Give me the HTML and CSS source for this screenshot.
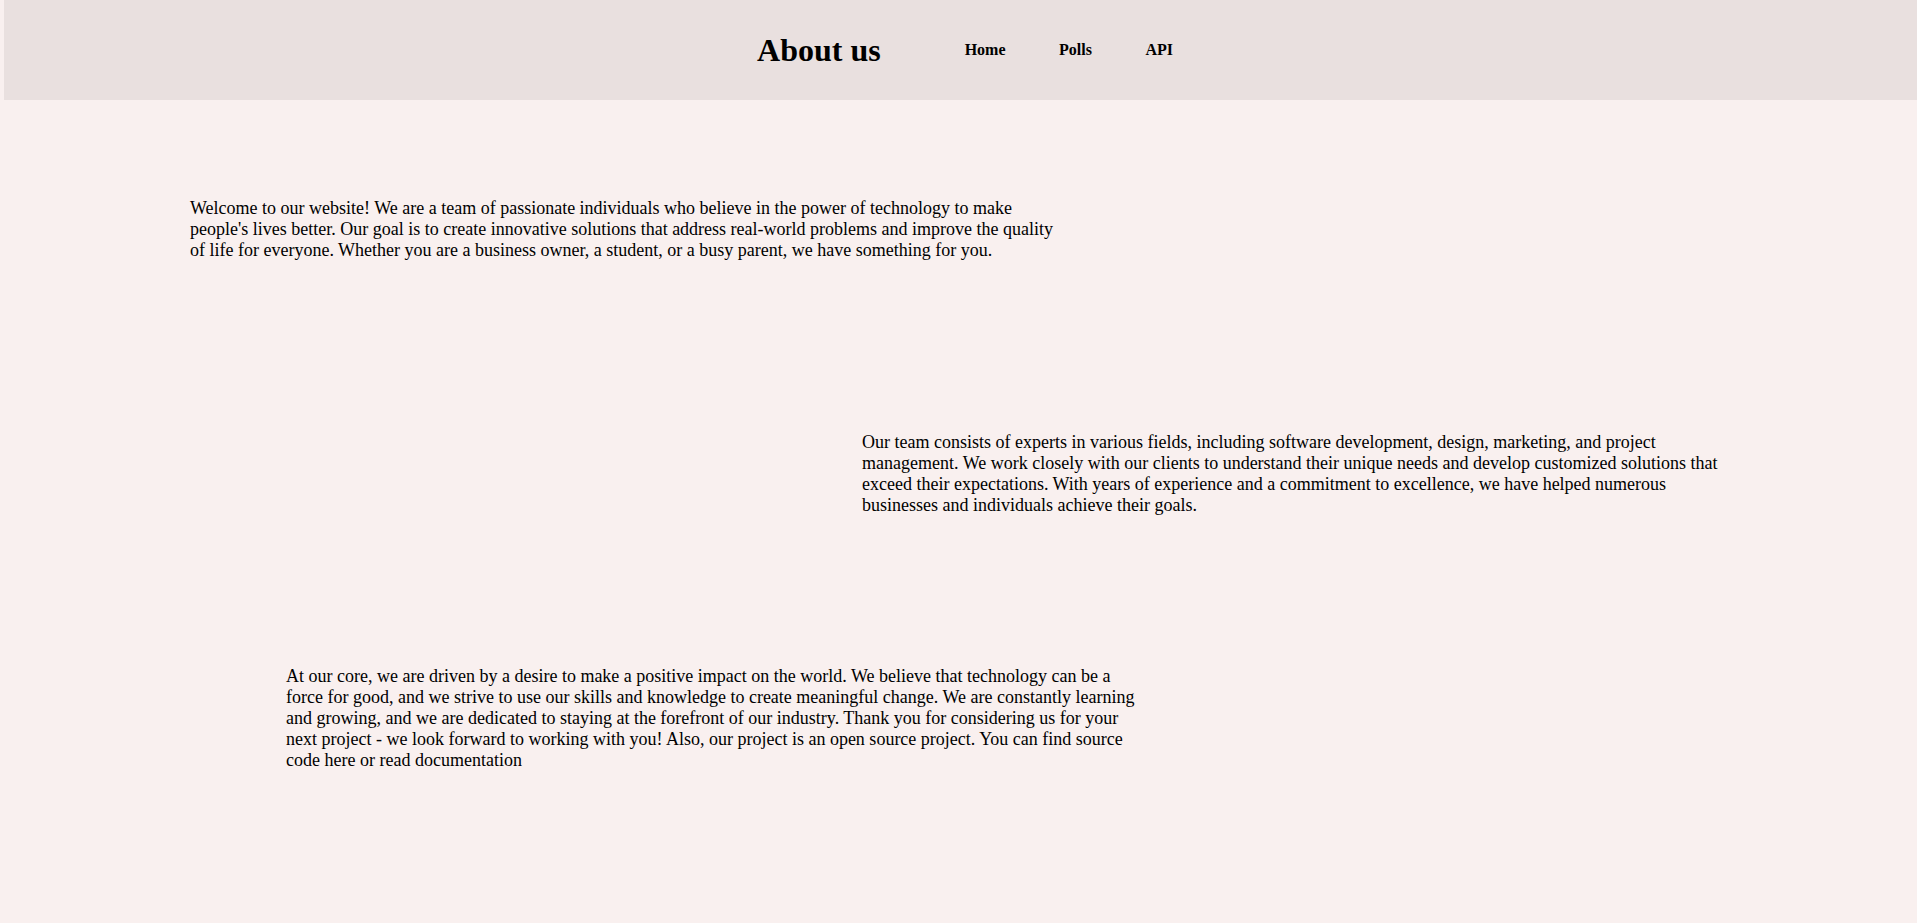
FILE: index.html
```html
<!DOCTYPE html>
<html lang="en">
<head>
<meta charset="utf-8">
<title>About us</title>
<link rel="stylesheet" href="styles.css">
</head>
<body>
<header class="topbar">
  <h1 class="title">About us</h1>
  <nav class="nav">
    <a class="nav-link" href="#">Home</a>
    <a class="nav-link" href="#">Polls</a>
    <a class="nav-link" href="#">API</a>
  </nav>
</header>
<main class="content">
  <section class="block">
    <p class="text text-first">Welcome to our website! We are a team of passionate individuals who believe in the power of technology to make people's lives better. Our goal is to create innovative solutions that address real-world problems and improve the quality of life for everyone. Whether you are a business owner, a student, or a busy parent, we have something for you.</p>
  </section>
  <section class="block">
    <p class="text text-second">Our team consists of experts in various fields, including software development, design, marketing, and project management. We work closely with our clients to understand their unique needs and develop customized solutions that exceed their expectations. With years of experience and a commitment to excellence, we have helped numerous businesses and individuals achieve their goals.</p>
  </section>
  <section class="block">
    <p class="text text-third">At our core, we are driven by a desire to make a positive impact on the world. We believe that technology can be a force for good, and we strive to use our skills and knowledge to create meaningful change. We are constantly learning and growing, and we are dedicated to staying at the forefront of our industry. Thank you for considering us for your next project - we look forward to working with you! Also, our project is an open source project. You can find source code <a class="inline-link" href="#">here</a> or read <a class="inline-link" href="#">documentation</a></p>
  </section>
</main>
</body>
</html>
```
FILE: styles.css
```css
html, body {
  margin: 0;
  padding: 0;
}
body {
  background: #f9f0ef;
  color: #000;
  font-family: "Liberation Serif", "Times New Roman", serif;
  overflow: hidden;
}
.topbar {
  margin-left: 4px;
  height: 100px;
  background: #e9e0df;
  display: flex;
  align-items: center;
  justify-content: center;
  padding-left: 9px;
}
.title {
  margin: 0 84px 0 0;
  font-size: 32px;
  font-weight: bold;
}
.nav {
  display: flex;
  gap: 53.5px;
}
.nav-link {
  color: #000;
  text-decoration: none;
  font-weight: bold;
  font-size: 16px;
}
.content {
  padding-top: 98px;
}
.block {
  height: 234px;
}
.text {
  margin: 0;
  width: 864px;
  font-size: 18px;
  line-height: 21px;
}
.text-first { margin-left: 190px; }
.text-second { margin-left: 862px; }
.text-third { margin-left: 286px; }
.inline-link {
  color: inherit;
  text-decoration: none;
}
```
